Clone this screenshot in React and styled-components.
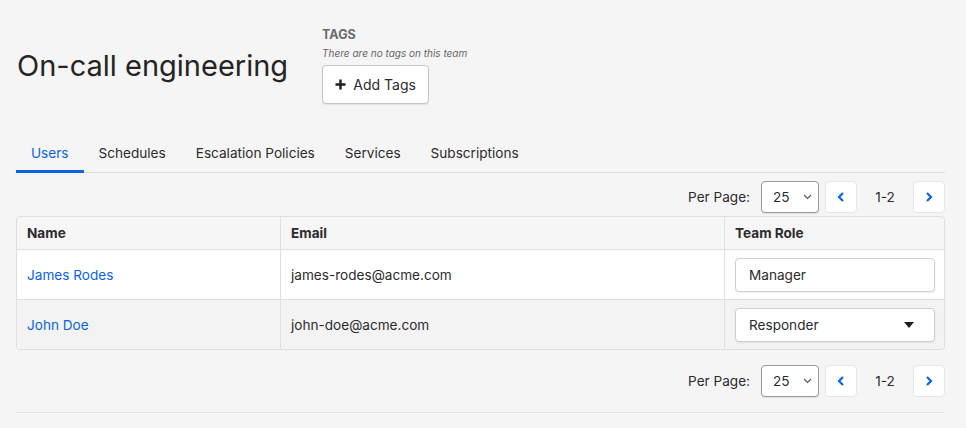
import { useState } from "react";
import styled, { createGlobalStyle } from "styled-components";

const GlobalStyle = createGlobalStyle`
  body {
    margin: 0;
    background: #f5f5f5;
    font-family: Inter, "Noto Sans", sans-serif;
    color: #2b2b2b;
  }
`;

const Page = styled.div`
  width: 929px;
  padding: 0 0 0 16px;
`;

const Header = styled.div`
  display: flex;
  align-items: center;
  gap: 34px;
  padding-top: 27px;
`;

const Title = styled.h1`
  margin: 0 0 0 1px;
  font-size: 29px;
  font-weight: 400;
  color: #242424;
`;

const TagsBlock = styled.div`
  display: flex;
  flex-direction: column;
  align-items: flex-start;
`;

const TagsLabel = styled.div`
  font-size: 12.5px;
  font-weight: 700;
  color: #6b6b6b;
  line-height: 16px;
`;

const TagsNote = styled.div`
  font-size: 10px;
  font-style: italic;
  color: #666;
  line-height: 13px;
  margin-top: 4px;
`;

const AddButton = styled.button`
  margin-top: 5px;
  height: 39px;
  width: 107px;
  display: flex;
  align-items: center;
  justify-content: center;
  gap: 7px;
  background: #fff;
  border: 1px solid #c4c4c4;
  border-radius: 4px;
  font-family: inherit;
  font-size: 14px;
  color: #2b2b2b;
  box-shadow: 0 1px 1px rgba(0, 0, 0, 0.08);
`;

const Tabs = styled.div`
  display: flex;
  margin-top: 32px;
  border-bottom: 1px solid #dcdcdc;
`;

const Tab = styled.div`
  padding: 0 15px;
  height: 34px;
  display: flex;
  align-items: center;
  font-size: 13.6px;
  color: ${(p) => (p.active ? "#0b63e5" : "#2b2b2b")};
  border-bottom: 3px solid ${(p) => (p.active ? "#0b63e5" : "transparent")};
  margin-bottom: -1px;
`;

const Pager = styled.div`
  display: flex;
  justify-content: flex-end;
  align-items: center;
  height: 32px;
  margin: ${(p) => p.margin};
`;

const PerPage = styled.span`
  font-size: 13.6px;
  color: #2b2b2b;
  margin-right: 11px;
`;

const PerSelect = styled.div`
  width: 58px;
  height: 32px;
  box-sizing: border-box;
  border: 1px solid #9a9a9a;
  border-radius: 4px;
  background: #fff;
  display: flex;
  align-items: center;
  justify-content: space-between;
  padding: 0 6px 0 11px;
  font-size: 13.6px;
  box-shadow: 0 1px 1px rgba(0, 0, 0, 0.1);
`;

const PageButton = styled.button`
  width: 32px;
  height: 32px;
  margin-left: ${(p) => p.ml || 0}px;
  background: #fff;
  border: 1px solid #e6e6e6;
  border-radius: 4px;
  display: flex;
  align-items: center;
  justify-content: center;
  padding: 0;
`;

const PageCount = styled.span`
  font-size: 13.6px;
  width: 56px;
  text-align: center;
  color: #2b2b2b;
`;

const Table = styled.div`
  margin-top: 3px;
  border: 1px solid #dedede;
  border-radius: 4px;
  overflow: hidden;
`;

const Row = styled.div`
  display: grid;
  grid-template-columns: 263px 444px 1fr;
  background: ${(p) => p.bg};
  border-top: ${(p) => (p.first ? "none" : "1px solid #dedede")};
`;

const Cell = styled.div`
  height: ${(p) => (p.head ? 32 : 49)}px;
  display: flex;
  align-items: center;
  padding: 0 10px;
  font-size: 13.6px;
  font-weight: ${(p) => (p.head ? 700 : 400)};
  color: ${(p) => (p.link ? "#0b63e5" : "#2b2b2b")};
  border-left: ${(p) => (p.first ? "none" : "1px solid #dedede")};
`;

const RoleBox = styled.div`
  width: 200px;
  height: 34px;
  box-sizing: border-box;
  background: #fff;
  border: 1px solid #cfcfcf;
  border-radius: 4px;
  display: flex;
  align-items: center;
  justify-content: space-between;
  padding: 0 20px 0 13px;
  font-size: 13.6px;
  color: #2b2b2b;
  box-shadow: 0 1px 2px rgba(0, 0, 0, 0.08);
`;

const Rule = styled.div`
  margin-top: 15px;
  height: 1px;
  background: #e3e3e3;
  border-bottom: 1px solid #fff;
`;

const users = [
  { name: "James Rodes", email: "james-rodes@acme.com", role: "Manager", caret: false },
  { name: "John Doe", email: "john-doe@acme.com", role: "Responder", caret: true },
];

const Plus = () => (
  <svg width="11" height="11" viewBox="0 0 11 11">
    <path d="M5.5 0.5v10M0.5 5.5h10" stroke="#1f1f1f" strokeWidth="2.4" />
  </svg>
);

const Chevron = ({ dir }) => (
  <svg width="10" height="12" viewBox="0 0 10 12">
    <path
      d={dir === "left" ? "M7 2L3 6l4 4" : "M3 2l4 4-4 4"}
      fill="none"
      stroke="#0b63e5"
      strokeWidth="2.2"
    />
  </svg>
);

const SmallCaret = () => (
  <svg width="9" height="6" viewBox="0 0 9 6">
    <path d="M1 1l3.5 3.5L8 1" fill="none" stroke="#555" strokeWidth="1.1" />
  </svg>
);

const Triangle = () => (
  <svg width="10" height="6" viewBox="0 0 10 6">
    <path d="M0 0h10L5 6z" fill="#1f1f1f" />
  </svg>
);

function Pagination({ margin }) {
  return (
    <Pager margin={margin}>
      <PerPage>Per Page:</PerPage>
      <PerSelect>
        25
        <SmallCaret />
      </PerSelect>
      <PageButton ml={6}>
        <Chevron dir="left" />
      </PageButton>
      <PageCount>1-2</PageCount>
      <PageButton>
        <Chevron dir="right" />
      </PageButton>
    </Pager>
  );
}

export default function App() {
  const [tab, setTab] = useState("Users");
  const tabs = ["Users", "Schedules", "Escalation Policies", "Services", "Subscriptions"];
  return (
    <Page>
      <GlobalStyle />
      <Header>
        <Title>On-call engineering</Title>
        <TagsBlock>
          <TagsLabel>TAGS</TagsLabel>
          <TagsNote>There are no tags on this team</TagsNote>
          <AddButton>
            <Plus />
            Add Tags
          </AddButton>
        </TagsBlock>
      </Header>
      <Tabs>
        {tabs.map((t) => (
          <Tab key={t} active={t === tab} onClick={() => setTab(t)}>
            {t}
          </Tab>
        ))}
      </Tabs>
      <Pagination margin="8px 0 0" />
      <Table>
        <Row bg="#f6f6f6" first>
          <Cell head first>Name</Cell>
          <Cell head>Email</Cell>
          <Cell head>Team Role</Cell>
        </Row>
        {users.map((u, i) => (
          <Row key={u.email} bg={i % 2 ? "#f3f3f3" : "#fff"}>
            <Cell link first>{u.name}</Cell>
            <Cell>{u.email}</Cell>
            <Cell>
              <RoleBox>
                {u.role}
                {u.caret && <Triangle />}
              </RoleBox>
            </Cell>
          </Row>
        ))}
      </Table>
      <Pagination margin="15px 0 0" />
      <Rule />
    </Page>
  );
}
